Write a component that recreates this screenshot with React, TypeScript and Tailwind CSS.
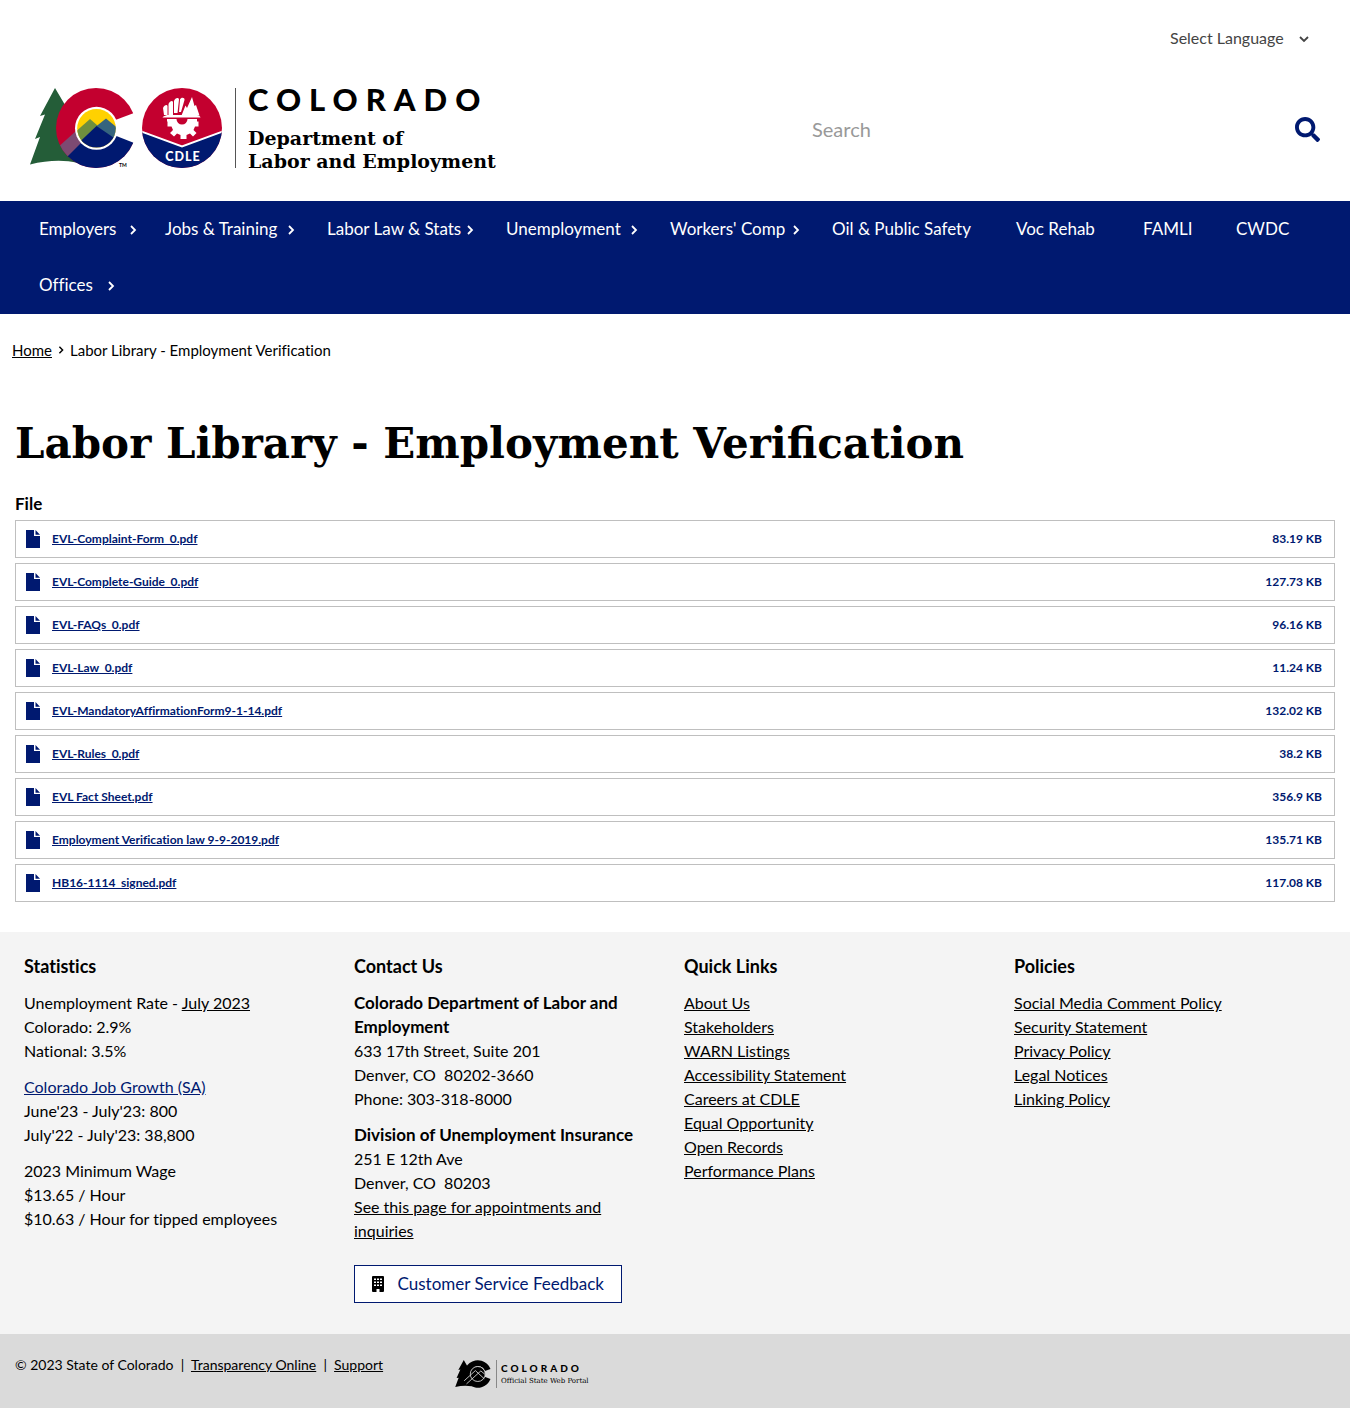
import React from "react";
import { FaSearch } from "react-icons/fa";

const sans = "font-['Lato','Open_Sans',sans-serif]";
const slab = "font-['DejaVu_Serif',serif]";

const navItems = [
  { label: "Employers", more: true, box: "min-w-[126px] pr-1" },
  { label: "Jobs & Training", more: true, box: "min-w-[162px] pr-2" },
  { label: "Labor Law & Stats", more: true, box: "min-w-[179px] pr-2" },
  { label: "Unemployment", more: true, box: "min-w-[164px] pr-2" },
  { label: "Workers' Comp", more: true, box: "min-w-[162px] pr-2" },
  { label: "Oil & Public Safety", more: false, box: "min-w-[184px]" },
  { label: "Voc Rehab", more: false, box: "min-w-[127px]" },
  { label: "FAMLI", more: false, box: "min-w-[93px]" },
  { label: "CWDC", more: false, box: "min-w-[98px]" },
  { label: "Offices", more: true, box: "min-w-[104px] pr-1" },
];

const files = [
  ["EVL-Complaint-Form_0.pdf", "83.19 KB"],
  ["EVL-Complete-Guide_0.pdf", "127.73 KB"],
  ["EVL-FAQs_0.pdf", "96.16 KB"],
  ["EVL-Law_0.pdf", "11.24 KB"],
  ["EVL-MandatoryAffirmationForm9-1-14.pdf", "132.02 KB"],
  ["EVL-Rules_0.pdf", "38.2 KB"],
  ["EVL Fact Sheet.pdf", "356.9 KB"],
  ["Employment Verification law 9-9-2019.pdf", "135.71 KB"],
  ["HB16-1114_signed.pdf", "117.08 KB"],
];

const quickLinks = [
  "About Us",
  "Stakeholders",
  "WARN Listings",
  "Accessibility Statement",
  "Careers at CDLE",
  "Equal Opportunity",
  "Open Records",
  "Performance Plans",
];

const policies = [
  "Social Media Comment Policy",
  "Security Statement",
  "Privacy Policy",
  "Legal Notices",
  "Linking Policy",
];

function Chevron({ className }: { className: string }) {
  return (
    <svg viewBox="0 0 8 10" className={className} fill="none" stroke="currentColor" strokeWidth="1.8" aria-hidden="true">
      <path d="M2 1l4 4-4 4" />
    </svg>
  );
}

function StateLogo() {
  return (
    <svg viewBox="0 0 192 84" className="h-[84px] w-48 shrink-0" role="img" aria-label="CDLE logo">
      <defs>
        <clipPath id="c-disc"><circle cx="66" cy="41" r="40" /></clipPath>
        <clipPath id="c-core"><circle cx="66.5" cy="41.3" r="19.3" /></clipPath>
        <clipPath id="badge"><circle cx="152" cy="41" r="40" /></clipPath>
      </defs>
      <path fill="#245d38" d="M25 1L10 29l5-1.500L5 52l5-2L0 77.500c17-4 33-5 48-1.500V30L38 23z" />
      <g clipPath="url(#c-disc)">
        <rect x="26" y="0" width="82" height="82" fill="#c3002f" />
        <path fill="#001970" d="M33 73L66 40l24 9 18 8v26H30z" />
        <path fill="#7d4a72" d="M26 62l20-18 9 8-20 20-10 4z" />
      </g>
      <path fill="#fff" d="M80 35l28-10.500v33L80 46.500z" />
      <circle cx="66.500" cy="41.300" r="21.500" fill="#fff" />
      <g clipPath="url(#c-core)">
        <rect x="46" y="20" width="42" height="42" fill="#ffd100" />
        <path fill="#6f8f3e" d="M44 46l16-14L75 45 52 58z" />
        <path fill="#35647e" d="M66 39.500l10-8 14 11.500v14z" />
        <path fill="#001970" d="M48 56.500L66.500 39 87 53v14H46z" />
      </g>
      <text x="89" y="80" fontSize="5" fontWeight="700" fontFamily="Lato, sans-serif">TM</text>
      <g clipPath="url(#badge)">
        <rect x="112" width="80" height="82" fill="#c3002f" />
        <path d="M110 44l42 15.500L194 44v40h-84z" fill="#001970" />
        <path d="M110 44l42 15.500L194 44" fill="none" stroke="#fff" strokeWidth="2" />
      </g>
      <g fill="#fff">
        <path d="M132.500 30.500c1-1.500 3-2 4.500-2.500h30c2 .5 3 1 3.500 2.500z" />
        <path d="M133 21c1-2.500 4-4 4.500-2v9H134zM138.500 17c1-2.500 4-4 4.500-2v13h-4.500zM144 14c1-3 4.500-4 5-1.500L147.500 26H144zM150 12.500c1-2.500 5-2 4.500.5L151 25h-2z" />
        <path d="M151.500 28.500l4-10 1.500 2.500 5-11 2.500 9 1.500-1 3.500 10.500z" />
        <path d="M137 32h9.500a5.500 5.500 0 0 0 11 0H167v2.500h1.500v5H165l-1.500 3.500 3 3-3.500 3.500-3-3-3.500 1.500V52h-6v-4l-3.500-1.500-3 3-4-3.500 3-3-1.500-3.500H137.500v-5H137z" />
      </g>
      <text x="153" y="73.500" textAnchor="middle" fill="#fff" fontSize="12.500" fontWeight="900" letterSpacing="1" fontFamily="Lato, sans-serif">CDLE</text>
    </svg>
  );
}

function PortalMark() {
  return (
    <svg viewBox="0 0 104 82" className="h-7 w-9 shrink-0" aria-hidden="true">
      <path d="M25 0L9 29l6-1L4 53l6-1L0 79c17-4 33-5 48-2V30L38 23z" />
      <path d="M103.300 26.300A40 40 0 1 0 103.300 55.700L86 49a21 21 0 1 1 1-17z" />
      <g fill="none" stroke="#dadada" strokeWidth="2.500">
        <circle cx="66" cy="41" r="22" fill="#000" />
        <path d="M26 61l33-30 26 24M33 70l42-38 12 10" />
      </g>
    </svg>
  );
}

function FileIcon() {
  return (
    <svg viewBox="0 0 14 18" className="h-[18px] w-3.5 shrink-0" fill="#001970" aria-hidden="true">
      <path d="M0 0h8v6h6v12H0z" />
      <path d="M9.500 0L14 4.700H9.500z" />
    </svg>
  );
}

function BuildingIcon() {
  return (
    <svg viewBox="0 0 12 16" className="h-4 w-3 shrink-0" aria-hidden="true">
      <path d="M1 0h10a1 1 0 0 1 1 1v14a1 1 0 0 1-1 1H7.500v-3h-3v3H1a1 1 0 0 1-1-1V1a1 1 0 0 1 1-1z" />
      <path fill="#fff" d="M2 2.500h2v1.500H2zM5 2.500h2v1.500H5zM8 2.500h2v1.500H8zM2 5.500h2V7H2zM5 5.500h2V7H5zM8 5.500h2V7H8zM2 8.500h2V10H2zM5 8.500h2V10H5zM8 8.500h2V10H8z" />
    </svg>
  );
}

function FooterLink({ children }: { children: React.ReactNode }) {
  return <a href="#" className="underline">{children}</a>;
}

function FooterColumn({ title, children }: { title: string; children: React.ReactNode }) {
  return (
    <section className="px-6">
      <h2 className="text-lg leading-6 font-bold">{title}</h2>
      <div className="mt-[13px] space-y-3 text-base">{children}</div>
    </section>
  );
}

export default function App() {
  return (
    <div className={`${sans} bg-white text-[17px] leading-6 text-black [font-variant-ligatures:none]`}>
      <header className="px-[30px] pt-6 pb-7">
        <div className="flex justify-end pr-2.5">
          <div className="relative">
            <select aria-label="Select Language" className="w-[140px] appearance-none bg-transparent pr-5 text-base leading-7 text-[#444]">
              <option>Select Language</option>
            </select>
            <span className="pointer-events-none absolute top-2.5 right-0.5 rotate-90 text-[#444]">
              <Chevron className="h-2.5 w-2" />
            </span>
          </div>
        </div>
        <div className="mt-[35px] flex items-start justify-between">
          <a href="#" className="flex items-start" aria-label="Colorado Department of Labor and Employment">
            <StateLogo />
            <span className="mt-px ml-[13px] h-20 w-px bg-[#555]" />
            <span className="ml-3 block whitespace-nowrap">
              <span className="block text-[31px] leading-6 font-black tracking-[8px]">COLORADO</span>
              <span className={`${slab} mt-4 block text-[19px] leading-[23px] font-bold`}>
                Department of<br />Labor and Employment
              </span>
            </span>
          </a>
          <form className="mt-6 flex w-[508px] items-center justify-between" role="search">
            <input type="search" aria-label="Search" placeholder="Search" className="min-w-0 flex-1 text-xl leading-9 outline-none placeholder:text-[#999]" />
            <button type="submit" aria-label="Submit search" className="text-[#001970]">
              <FaSearch className="size-[25px]" />
            </button>
          </form>
        </div>
      </header>

      <nav aria-label="Main" className="bg-[#001970] px-[15px] pb-px text-white">
        <ul className="flex flex-wrap">
          {navItems.map((item) => (
            <li key={item.label}>
              <a href="#" className={`flex h-14 items-center justify-between pl-6 ${item.box}`}>
                <span className="whitespace-nowrap">{item.label}</span>
                {item.more && <Chevron className="mt-0.5 h-2.5 w-2" />}
              </a>
            </li>
          ))}
        </ul>
      </nav>

      <div className="flex items-center px-3 pt-6 text-[15px]">
        <a href="#" className="underline">Home</a>
        <Chevron className="mx-[5px] h-2 w-2" />
        <span>Labor Library - Employment Verification</span>
      </div>

      <main className="px-[15px] pt-[52px] pb-[30px]">
        <h1 className={`${slab} text-[42px] leading-[60px] font-bold [font-variant-ligatures:normal]`}>Labor Library - Employment Verification</h1>
        <h2 className="mt-[18px] leading-6 font-bold">File</h2>
        <ul className="mt-1 space-y-[5px] text-xs font-bold text-[#001970]">
          {files.map(([name, size]) => (
            <li key={name} className="flex h-[38px] items-center border border-[#bfbfbf] pr-3 pl-2.5">
              <FileIcon />
              <a href="#" className="ml-3 underline">{name}</a>
              <span className="ml-auto">{size}</span>
            </li>
          ))}
        </ul>
      </main>

      <footer>
        <div className="grid grid-cols-4 bg-[#f4f4f4] pt-[22px] pb-[31px] pr-[30px]">
          <FooterColumn title="Statistics">
            <p>
              Unemployment Rate - <FooterLink>July 2023</FooterLink><br />
              Colorado: 2.9%<br />National: 3.5%
            </p>
            <p>
              <span className="text-[#001970]"><FooterLink>Colorado Job Growth (SA)</FooterLink></span><br />
              June'23 - July'23: 800<br />July'22 - July'23: 38,800
            </p>
            <p>2023 Minimum Wage<br />$13.65 / Hour<br />$10.63 / Hour for tipped employees</p>
          </FooterColumn>
          <FooterColumn title="Contact Us">
            <p>
              <strong className="text-[17px] leading-none">Colorado Department of Labor and Employment</strong><br />
              633 17th Street, Suite 201<br />Denver, CO&nbsp; 80202-3660<br />Phone: 303-318-8000
            </p>
            <p>
              <strong className="text-[17px] leading-none">Division of Unemployment Insurance</strong><br />
              251 E 12th Ave<br />Denver, CO&nbsp; 80203<br />
              <FooterLink>See this page for appointments and inquiries</FooterLink>
            </p>
            <a href="#" className="mt-[22px] flex h-[38px] w-[268px] items-center justify-between border border-[#001970] bg-white px-[17px] text-[17px] whitespace-nowrap text-[#001970]">
              <span className="text-black"><BuildingIcon /></span>
              Customer Service Feedback
            </a>
          </FooterColumn>
          <FooterColumn title="Quick Links">
            <ul>{quickLinks.map((l) => <li key={l}><FooterLink>{l}</FooterLink></li>)}</ul>
          </FooterColumn>
          <FooterColumn title="Policies">
            <ul>{policies.map((l) => <li key={l}><FooterLink>{l}</FooterLink></li>)}</ul>
          </FooterColumn>
        </div>
        <div className="flex h-[74px] items-start bg-[#dadada] px-[15px] pt-[19px] text-sm leading-6">
          <p className="w-[440px] whitespace-pre">
            © 2023 State of Colorado  |  <FooterLink>Transparency Online</FooterLink>  |  <FooterLink>Support</FooterLink>
          </p>
          <a href="#" className="mt-[7px] flex items-start whitespace-nowrap" aria-label="Colorado Official State Web Portal">
            <PortalMark />
            <span className="ml-[5px] h-7 w-px bg-[#888]" />
            <span className="ml-1 block">
              <span className="block text-[10px] leading-4 font-black tracking-[3px]">COLORADO</span>
              <span className={`${slab} block text-[7px] leading-[10px]`}>Official State Web Portal</span>
            </span>
          </a>
        </div>
      </footer>
    </div>
  );
}
